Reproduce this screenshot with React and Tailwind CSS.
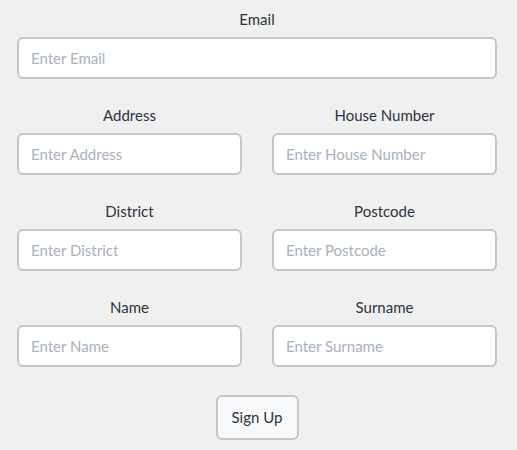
import React from "react";

function Field({ label, placeholder }) {
  return (
    <div className="flex flex-col">
      <label className="text-center text-[15px] leading-5 text-[#2c3440] mb-2">{label}</label>
      <input
        type="text"
        placeholder={placeholder}
        className="h-[42px] w-full rounded-md border-2 border-[#c3c6ca] bg-white px-3 text-[15px] text-[#2c3440] placeholder:text-[#a9b2bd] outline-none"
      />
    </div>
  );
}

export default function App() {
  return (
    <div
      className="min-h-screen bg-[#f0f0f0] pl-[17px] pr-[20px] pt-[9px]"
      style={{ fontFamily: "Lato, 'Noto Sans', sans-serif" }}
    >
      <div className="flex flex-col gap-[26px]">
        <Field label="Email" placeholder="Enter Email" />
        <div className="grid grid-cols-2 gap-x-[30px]">
          <Field label="Address" placeholder="Enter Address" />
          <Field label="House Number" placeholder="Enter House Number" />
        </div>
        <div className="grid grid-cols-2 gap-x-[30px]">
          <Field label="District" placeholder="Enter District" />
          <Field label="Postcode" placeholder="Enter Postcode" />
        </div>
        <div className="grid grid-cols-2 gap-x-[30px]">
          <Field label="Name" placeholder="Enter Name" />
          <Field label="Surname" placeholder="Enter Surname" />
        </div>
      </div>
      <div className="flex justify-center pt-[28px]">
        <button className="h-[45px] w-[83px] rounded-md border-2 border-[#c3c6ca] bg-[#f8f9fb] text-[15px] text-[#2c3440]">
          Sign Up
        </button>
      </div>
    </div>
  );
}
